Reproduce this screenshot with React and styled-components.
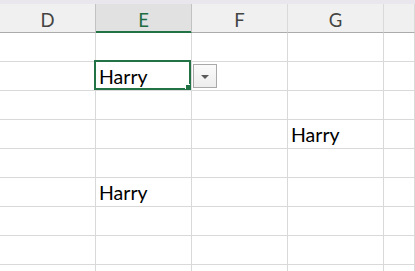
import React from "react";
import styled, { createGlobalStyle } from "styled-components";

const GlobalStyle = createGlobalStyle`
  html, body {
    margin: 0;
    padding: 0;
    background: #fff;
    overflow: hidden;
  }
  body {
    font-family: Lato, "Open Sans", sans-serif;
  }
`;

const columns = ["D", "E", "F", "G", "H"];
const selectedCol = "E";

// row index -> { column: value }
const data = {
  1: { E: "Harry" },
  3: { G: "Harry" },
  5: { E: "Harry" },
};

const Sheet = styled.div`
  width: 415px;
  height: 271px;
  overflow: hidden;
  background: #fff;
`;

const TopStrip = styled.div`
  height: 4px;
  background: #e9e6ee;
`;

const Grid = styled.div`
  display: grid;
  grid-template-columns: 96px 96px 96px 96px 1fr;
  grid-auto-rows: 29px;
`;

const HeaderCell = styled.div`
  box-sizing: border-box;
  display: flex;
  align-items: flex-end;
  justify-content: center;
  padding-bottom: 3px;
  background: ${(p) => (p.selected ? "#e1e1e1" : "#f0f0f0")};
  border-right: 1px solid ${(p) => (p.dark ? "#c2c2c2" : "#dadada")};
  border-bottom: 1px solid ${(p) => (p.selected ? "#217346" : "#ababab")};
  box-shadow: ${(p) => (p.selected ? "inset 0 -1px 0 #217346" : "none")};
  color: ${(p) => (p.selected ? "#1f6b42" : "#444")};
  font-size: 18.5px;
  line-height: 1;
`;

const Cell = styled.div`
  position: relative;
  box-sizing: border-box;
  display: flex;
  align-items: flex-end;
  padding: 0 0 4px 3px;
  border-right: 1px solid #d9d9d9;
  border-bottom: 1px solid #d9d9d9;
  font-size: 19.5px;
  line-height: 1;
  color: #000;
  white-space: nowrap;
`;

const ActiveBox = styled.div`
  position: absolute;
  left: -2px;
  top: -2px;
  right: 0;
  bottom: 0;
  border: 2px solid #217346;
  z-index: 2;
`;

const FillHandle = styled.div`
  position: absolute;
  right: -2px;
  bottom: -2px;
  width: 5px;
  height: 5px;
  background: #217346;
  box-shadow: -1px -1px 0 #fff;
`;

const DropButton = styled.div`
  position: absolute;
  left: 97px;
  top: 2px;
  width: 24px;
  height: 24px;
  box-sizing: border-box;
  border: 1px solid #a9a9a9;
  background: linear-gradient(#fbfbfb, #ededed);
  display: flex;
  align-items: center;
  justify-content: center;
  z-index: 2;
`;

const Arrow = styled.span`
  width: 0;
  height: 0;
  margin-top: 1px;
  border-left: 4px solid transparent;
  border-right: 4px solid transparent;
  border-top: 4px solid #5a5a5a;
`;

export default function App() {
  const rows = Array.from({ length: 9 }, (_, i) => i);
  return (
    <Sheet>
      <GlobalStyle />
      <TopStrip />
      <Grid>
        {columns.map((c, i) => (
          <HeaderCell
            key={c}
            selected={c === selectedCol}
            dark={i < 2}
          >
            {c === "H" ? "" : c}
          </HeaderCell>
        ))}
        {rows.map((r) =>
          columns.map((c) => {
            const active = r === 1 && c === selectedCol;
            return (
              <Cell key={`${r}-${c}`}>
                {data[r]?.[c]}
                {active && (
                  <>
                    <ActiveBox>
                      <FillHandle />
                    </ActiveBox>
                    <DropButton>
                      <Arrow />
                    </DropButton>
                  </>
                )}
              </Cell>
            );
          })
        )}
      </Grid>
    </Sheet>
  );
}
